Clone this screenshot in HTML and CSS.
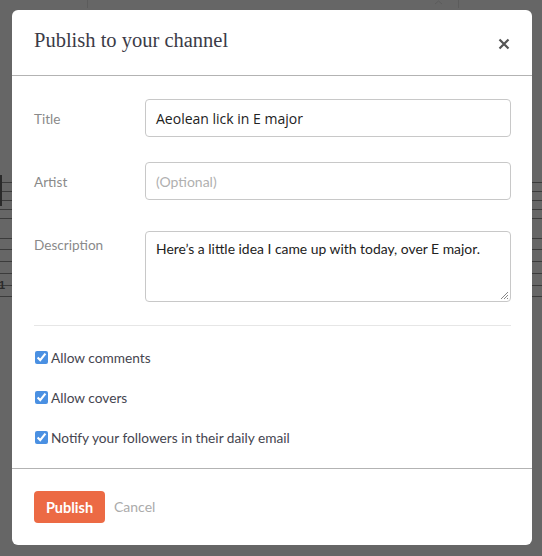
FILE: index.html
```html
<!DOCTYPE html>
<html>
<head>
<meta charset="utf-8">
<link rel="stylesheet" href="styles.css">
</head>
<body>
<div class="backdrop">
  <svg class="staff" width="542" height="556" viewBox="0 0 542 556" xmlns="http://www.w3.org/2000/svg">
    <g stroke="#3b3b3b" stroke-width="1">
      <line x1="0" y1="182.5" x2="542" y2="182.5"/>
      <line x1="0" y1="191.5" x2="542" y2="191.5"/>
      <line x1="0" y1="200.5" x2="542" y2="200.5"/>
      <line x1="0" y1="209.5" x2="542" y2="209.5"/>
      <line x1="0" y1="218.5" x2="542" y2="218.5"/>
      <line x1="0" y1="238.5" x2="542" y2="238.5"/>
      <line x1="0" y1="249.5" x2="542" y2="249.5"/>
      <line x1="0" y1="261.5" x2="542" y2="261.5"/>
      <line x1="0" y1="273.5" x2="542" y2="273.5"/>
      <line x1="0" y1="285.5" x2="542" y2="285.5"/>
      <line x1="0" y1="296.5" x2="542" y2="296.5"/>
    </g>
    <g stroke="#5c5c5c" stroke-width="1" fill="none">
      <line x1="87.5" y1="0" x2="87.5" y2="8"/>
      <line x1="458.5" y1="0" x2="458.5" y2="8"/>
      <path d="M435 4 L438.5 1 L442 4"/>
    </g>
    <rect x="0" y="175" width="2" height="31" fill="#2a2a2a"/>
    <text x="-1" y="289" font-family="Liberation Sans, sans-serif" font-size="11" font-weight="bold" fill="#2a2a2a">1</text>
  </svg>
</div>

<div class="modal">
  <div class="modal-header">
    <h2 class="modal-title">Publish to your channel</h2>
    <span class="close">
      <svg width="12" height="12" viewBox="0 0 12 12"><path d="M1.5 1.5 L10.5 10.5 M10.5 1.5 L1.5 10.5" stroke="#555" stroke-width="2.2" stroke-linecap="butt"/></svg>
    </span>
  </div>

  <div class="modal-body">
    <div class="field field-title">
      <label class="label">Title</label>
      <div class="input">Aeolean lick in E major</div>
    </div>
    <div class="field field-artist">
      <label class="label">Artist</label>
      <div class="input placeholder">(Optional)</div>
    </div>
    <div class="field field-desc">
      <label class="label label-top">Description</label>
      <div class="textarea">Here’s a little idea I came up with today, over E major.
        <svg class="grip" width="10" height="10" viewBox="0 0 10 10"><path d="M9 2 L2 9 M9 5 L5 9 M9 8 L8 9" stroke="#888" stroke-width="1"/></svg>
      </div>
    </div>

    <div class="divider"></div>

    <div class="checks">
      <label class="check"><input type="checkbox" checked> Allow comments</label>
      <label class="check"><input type="checkbox" checked> Allow covers</label>
      <label class="check"><input type="checkbox" checked> Notify your followers in their daily email</label>
    </div>
  </div>

  <div class="modal-footer">
    <button class="btn-primary">Publish</button>
    <span class="btn-link">Cancel</span>
  </div>
</div>
</body>
</html>
```
FILE: styles.css
```css
html, body {
  margin: 0;
  padding: 0;
  width: 542px;
  height: 556px;
  overflow: hidden;
  background: #666666;
  font-family: "Lato", "Open Sans", sans-serif;
}

.backdrop {
  position: absolute;
  left: 0;
  top: 0;
  width: 542px;
  height: 556px;
}

.staff {
  display: block;
}

.modal {
  position: absolute;
  left: 12px;
  top: 10px;
  width: 520px;
  height: 535px;
  background: #ffffff;
  border-radius: 6px;
  display: flex;
  flex-direction: column;
  overflow: hidden;
}

.modal-header {
  height: 66px;
  border-bottom: 1px solid #b3b3b3;
  display: flex;
  align-items: center;
  justify-content: space-between;
  padding: 0 22px 0 22px;
  box-sizing: border-box;
  flex: none;
}

.modal-title {
  margin: 0;
  font-family: "Liberation Serif", serif;
  font-weight: normal;
  font-size: 20.5px;
  color: #3b3b47;
  padding-bottom: 5px;
}

.close {
  display: flex;
  margin-top: 3px;
}

.modal-body {
  flex: 1;
  padding: 23px 21px 0 22px;
}

.field {
  display: flex;
  align-items: center;
}

.label {
  width: 111px;
  flex: none;
  font-size: 13.6px;
  color: #8a8a8a;
  padding-top: 2px;
}

.label-top {
  align-self: flex-start;
  padding-top: 6px;
}

.input {
  flex: 1;
  height: 38px;
  box-sizing: border-box;
  border: 1px solid #c8c8c8;
  border-radius: 4px;
  padding: 0 10px;
  display: flex;
  align-items: center;
  font-family: "Open Sans", sans-serif;
  font-size: 14px;
  color: #222;
}

.placeholder {
  font-family: "Lato", sans-serif;
  font-size: 14px;
  color: #b0b0b0;
}

.field-artist {
  margin-top: 25px;
}

.field-desc {
  margin-top: 31px;
}

.textarea {
  flex: 1;
  height: 71px;
  box-sizing: border-box;
  border: 1px solid #c8c8c8;
  border-radius: 4px;
  padding: 8px 10px;
  font-size: 13.9px;
  color: #222;
  position: relative;
}

.grip {
  position: absolute;
  right: 1px;
  bottom: 1px;
}

.divider {
  height: 1px;
  background: #e6e6e6;
  margin-top: 23px;
}

.checks {
  display: flex;
  flex-direction: column;
  padding-top: 22px;
  gap: 22px;
}

.check {
  display: flex;
  align-items: center;
  height: 18px;
  font-size: 13.7px;
  color: #45454f;
}

.check input {
  margin: 0 3px 0 1px;
  width: 13px;
  height: 13px;
  accent-color: #4a90e2;
}

.modal-footer {
  flex: none;
  height: 77px;
  box-sizing: border-box;
  border-top: 1px solid #b3b3b3;
  padding: 22px 22px 0 22px;
  display: flex;
  align-items: flex-start;
  gap: 9px;
}

.btn-primary {
  height: 32px;
  width: 71px;
  border: none;
  border-radius: 4px;
  background: #ec6a44;
  color: #fff;
  font-family: "Lato", sans-serif;
  font-weight: bold;
  font-size: 14.5px;
  padding: 0;
}

.btn-link {
  line-height: 32px;
  font-size: 14px;
  color: #ababab;
}
```
